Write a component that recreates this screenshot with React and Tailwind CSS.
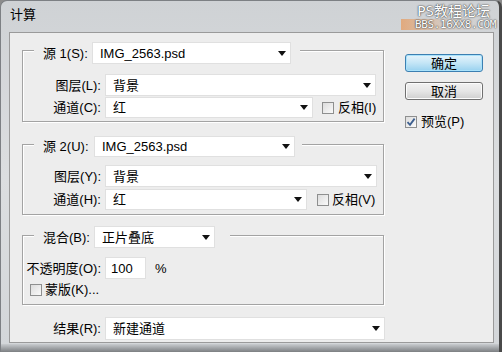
import React from 'react';

const font = '"Liberation Sans", "Noto Sans CJK SC", sans-serif';

function Arrow() {
  return (
    <svg width="8" height="5" viewBox="0 0 8 5" className="shrink-0">
      <path d="M0 0H8L4 5Z" fill="#111" />
    </svg>
  );
}

function Select({value, className}) {
  return (
    <div className={`flex items-center justify-between bg-white border border-[#e0e0e0] pl-[7px] pr-[4px] ${className}`}>
      <span className="leading-none">{value}</span>
      <Arrow />
    </div>
  );
}

function Check({checked}) {
  return (
    <div className="w-[12px] h-[12px] border border-[#8e8f8f] bg-gradient-to-br from-[#dcdcdc] to-[#fafafa] flex items-center justify-center shrink-0">
      {checked && (
        <svg width="10" height="10" viewBox="0 0 10 10">
          <path d="M1.5 5.2 L4 7.8 L8.6 1.6" fill="none" stroke="#3d5f8f" strokeWidth="1.8" />
        </svg>
      )}
    </div>
  );
}

function Row({label, children, className}) {
  return (
    <div className={`flex items-center ${className}`}>
      <span className="w-[78px] text-right leading-none">{label}</span>
      <div className="ml-[4px] flex items-center">{children}</div>
    </div>
  );
}

function Group({label, labelW, select, selectW, pr, headerMt, children, className}) {
  return (
    <div className={`border border-[#a3a3a3] shadow-[inset_1px_1px_0_#fff,1px_1px_0_#fff] ${className}`}>
      <div className={`flex items-center ml-[11px] pl-[9px] bg-[#ededed] w-fit ${headerMt} ${pr}`}>
        <span className={`leading-none ${labelW}`}>{label}</span>
        <Select value={select} className={selectW} />
      </div>
      {children}
    </div>
  );
}

export default function App() {
  return (
    <div className="w-[502px] h-[352px] bg-[#8c8c8c] overflow-hidden text-[13px] text-black" style={{fontFamily: font}}>
      <div className="w-[502px] h-[352px] flex flex-col rounded-t-[7px] bg-gradient-to-b from-[#cfd2d5] via-[#dcdee0] to-[#d3d6d9] border-l border-t border-[#7d8084] border-r-[3px] border-r-[#4a4a4a]">
        <div className="h-[31px] flex items-start justify-between relative">
          <span className="ml-[9px] mt-[7px] leading-none text-[13px]">计算</span>
          <div className="mr-[3px] mt-[3px] flex flex-col items-end leading-none text-white [text-shadow:0_0_2px_#444,0_0_1px_#222]" style={{fontFamily: '"DejaVu Sans Mono", "Noto Sans CJK SC", monospace'}}>
            <span className="text-[14px] mr-[6px]">PS教程论坛</span>
            <span className="text-[11px] mt-[1px] tracking-[-0.4px] bg-gradient-to-r from-[#e89858]/70 via-[#e89858]/10 to-transparent pl-[14px]">BBS.16XX8.COM</span>
          </div>
        </div>
        <div className="flex flex-1">
          <div className="w-[8px]" />
          <div className="w-[485px] h-[311px] border border-[#9a9a9a] bg-[#ededed] flex">
            <div className="pl-[12px] pt-[17px] flex flex-col">
              <Group label="源 1(S):" labelW="w-[49px]" select="IMG_2563.psd" selectW="w-[199px] h-[22px]" pr="pr-[9px]" headerMt="-mt-[9px] h-[22px]" className="w-[362px] pb-[3px]">
                <Row label="图层(L):" className="mt-[10px] h-[22px]">
                  <Select value="背景" className="w-[271px] h-[22px]" />
                </Row>
                <Row label="通道(C):" className="mt-[1px] h-[21px]">
                  <Select value="红" className="w-[208px] h-[21px]" />
                  <div className="ml-[9px]"><Check /></div>
                  <span className="ml-[4px] leading-none">反相(I)</span>
                </Row>
              </Group>
              <Group label="源 2(U):" labelW="w-[51px]" select="IMG_2563.psd" selectW="w-[201px] h-[21px]" pr="pr-[7px]" headerMt="-mt-[9px] h-[21px]" className="mt-[22px] w-[362px] pb-[4px]">
                <Row label="图层(Y):" className="mt-[8px] h-[22px]">
                  <Select value="背景" className="w-[272px] h-[22px]" />
                </Row>
                <Row label="通道(H):" className="mt-[2px] h-[21px]">
                  <Select value="红" className="w-[202px] h-[21px]" />
                  <div className="ml-[10px]"><Check /></div>
                  <span className="ml-[3px] leading-none">反相(V)</span>
                </Row>
              </Group>
              <Group label="混合(B):" labelW="w-[51px]" select="正片叠底" selectW="w-[121px] h-[22px]" pr="pr-[15px]" headerMt="-mt-[10px] h-[22px]" className="mt-[20px] w-[362px] pb-[8px]">
                <Row label="不透明度(O):" className="mt-[9px] h-[22px]">
                  <div className="w-[41px] h-[22px] bg-white border border-[#e0e0e0] pl-[5px] flex items-center leading-none">100</div>
                  <span className="ml-[9px] leading-none">%</span>
                </Row>
                <div className="mt-[4px] h-[13px] flex items-center pl-[7px]">
                  <Check />
                  <span className="ml-[3px] leading-none">蒙版(K)...</span>
                </div>
              </Group>
              <Row label="结果(R):" className="mt-[12px] h-[23px] ml-[1px]">
                <Select value="新建通道" className="w-[280px] h-[23px]" />
              </Row>
            </div>
            <div className="ml-[20px] pt-[21px] flex flex-col">
              <button className="w-[78px] h-[18px] rounded-[3px] border border-[#3c7fb1] bg-gradient-to-b from-[#e5f4fc] via-[#c4e5f6] to-[#98d1ef] shadow-[inset_0_0_0_1px_#a9e2fb] flex items-center justify-center leading-none text-[13px]">
                确定
              </button>
              <button className="mt-[10px] w-[78px] h-[18px] rounded-[3px] border border-[#707070] bg-gradient-to-b from-[#f2f2f2] via-[#e6e6e6] to-[#cfcfcf] shadow-[inset_0_0_0_1px_#fcfcfc] flex items-center justify-center leading-none text-[13px]">
                取消
              </button>
              <div className="mt-[15px] flex items-center">
                <Check checked />
                <span className="ml-[4px] leading-none">预览(P)</span>
              </div>
            </div>
          </div>
          <div className="flex-1" />
        </div>
        <div className="h-[8px] bg-gradient-to-b from-[#c9cccf] to-[#7c7f82]" />
      </div>
    </div>
  );
}
